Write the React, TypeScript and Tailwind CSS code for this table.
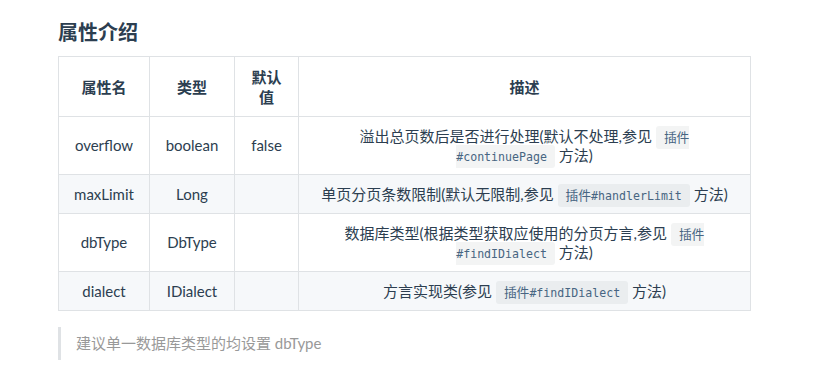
import React from "react";

const font = { fontFamily: 'Lato, "Noto Sans CJK SC", sans-serif' };

function Code({ zh, en, br }: { zh?: string; en?: string; br?: boolean }) {
  return (
    <code className="box-decoration-slice rounded-[3px] bg-[rgba(27,31,35,0.05)] px-2 py-[4px] font-['DejaVu_Sans_Mono','Noto_Sans_CJK_SC',monospace] text-[12.75px] leading-[14px] text-[#476582]">
      {zh && <span className="font-['Noto_Sans_CJK_SC',sans-serif]">{zh}</span>}
      {br && <br />}
      {en && <span className="text-[11.6px]">{en}</span>}
    </code>
  );
}

const td = "border border-[#dfe2e5] px-[15px] py-[9.5px] text-center align-middle leading-[19px]";
const th = "border border-[#dfe2e5] px-[15px] py-[9.5px] text-center align-middle leading-5 font-bold";

export default function App() {
  return (
    <div className="min-h-[377px] w-[838px] bg-white pl-[58px] pt-[18px] text-[15px] leading-5 text-[#2c3e50]" style={font}>
      <h2 className="mb-[10px] text-[20px] font-bold leading-[28px]">属性介绍</h2>
      <table className="w-[693px] table-fixed border-collapse">
        <colgroup>
          <col className="w-[91px]" />
          <col className="w-[85px]" />
          <col className="w-[64px]" />
          <col />
        </colgroup>
        <thead>
          <tr>
            <th className={th}>属性名</th>
            <th className={th}>类型</th>
            <th className={th}>默认值</th>
            <th className={th}>描述</th>
          </tr>
        </thead>
        <tbody>
          <tr>
            <td className={td}>overflow</td>
            <td className={td}>boolean</td>
            <td className={td}>false</td>
            <td className={td}>
              溢出总页数后是否进行处理(默认不处理,参见 <Code zh="插件" br en="#continuePage" /> 方法)
            </td>
          </tr>
          <tr className="bg-[#f6f8fa]">
            <td className={td}>maxLimit</td>
            <td className={td}>Long</td>
            <td className={td}></td>
            <td className={td}>
              单页分页条数限制(默认无限制,参见 <Code zh="插件" en="#handlerLimit" /> 方法)
            </td>
          </tr>
          <tr>
            <td className={td}>dbType</td>
            <td className={td}>DbType</td>
            <td className={td}></td>
            <td className={td}>
              数据库类型(根据类型获取应使用的分页方言,参见 <Code zh="插件" br en="#findIDialect" /> 方法)
            </td>
          </tr>
          <tr className="bg-[#f6f8fa]">
            <td className={td}>dialect</td>
            <td className={td}>IDialect</td>
            <td className={td}></td>
            <td className={td}>
              方言实现类(参见 <Code zh="插件" en="#findIDialect" /> 方法)
            </td>
          </tr>
        </tbody>
      </table>
      <blockquote className="mt-4 border-l-[3px] border-[#dfe2e5] py-[6px] pl-[15px] text-[15px] leading-[21px] text-[#999]">
        建议单一数据库类型的均设置 dbType
      </blockquote>
    </div>
  );
}
